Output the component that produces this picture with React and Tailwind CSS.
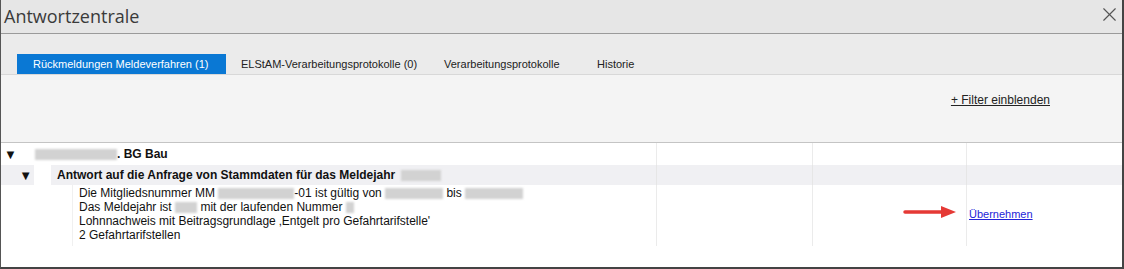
import { X } from "lucide-react"

const tabs = [
  { label: "Rückmeldungen Meldeverfahren (1)", w: "w-[209px] pl-[16px]", active: true },
  { label: "ELStAM-Verarbeitungsprotokolle (0)", w: "w-[203px] pl-[15px]" },
  { label: "Verarbeitungsprotokolle", w: "w-[153px] pl-[15px]" },
  { label: "Historie", w: "w-[80px] pl-[15px]" },
]

function Blur({ w }) {
  return <span className={`inline-block h-[11px] align-middle bg-[#d2d2d2] blur-[1px] ${w}`} />
}

function Arrow() {
  return (
    <svg width="54" height="14" viewBox="0 0 54 14">
      <path d="M2 7 H40" stroke="#e53935" strokeWidth="3.5" strokeLinecap="round" />
      <path d="M38 1 L53 7 L38 13 Z" fill="#e53935" />
    </svg>
  )
}

export default function App() {
  return (
    <div className="w-[1124px] h-[269px] flex flex-col bg-white border-l border-l-[#555] border-r-2 border-r-[#444] border-b-2 border-b-[#444] overflow-hidden font-['Liberation_Sans',Arial,sans-serif]">
      {/* title bar */}
      <div className="h-[34px] shrink-0 flex items-center justify-between bg-[#e6e6e6] border-b border-[#9a9a9a] pl-[3px] pr-[1px]">
        <span className="text-[18px] text-[#3a3a3a] font-['Open_Sans',sans-serif] leading-none pb-[2px]">Antwortzentrale</span>
        <X size={23} strokeWidth={1.2} className="text-[#555] mb-[4px]" />
      </div>

      {/* tabs */}
      <div className="h-[41px] shrink-0 flex items-end bg-[#ebebeb] border-b border-[#d8d8d8] pl-[16px]">
        {tabs.map((t) => (
          <div
            key={t.label}
            className={`h-[20px] shrink-0 flex items-center text-[11px] ${t.w} ${
              t.active ? "bg-[#0a78d4] text-white" : "text-[#222]"
            }`}
          >
            {t.label}
          </div>
        ))}
      </div>

      {/* filter */}
      <div className="h-[68px] shrink-0 flex justify-end bg-[#f4f4f4] border-b border-[#c4c4c4] pr-[72px] pt-[16px]">
        <span className="text-[12px] text-[#222] underline h-[15px]">+ Filter einblenden</span>
      </div>

      {/* grid */}
      <div className="grid grid-cols-[656px_156px_154px_1fr] text-[12px] text-[#111]">
        {/* row 1 */}
        <div className="h-[22px] flex items-center border-r border-[#ebebeb]">
          <span className="w-[34px] pl-[3px] text-[13px] leading-none">▼</span>
          <Blur w="w-[82px]" />
          <span className="font-bold">. BG Bau</span>
        </div>
        <div className="border-r border-[#ebebeb]" />
        <div className="border-r border-[#ebebeb]" />
        <div />

        {/* row 2 */}
        <div className="h-[20px] flex items-center border-r border-[#e6e6e6]">
          <span className="w-[33px] h-full flex items-center justify-end pr-[2px] bg-[#f0f0f3] text-[13px] leading-none">▼</span>
          <span className="w-[17px] h-full" />
          <span className="flex-1 h-full flex items-center gap-[6px] bg-[#f0f0f3] pl-[6px] font-bold">
            Antwort auf die Anfrage von Stammdaten für das Meldejahr
            <Blur w="w-[40px]" />
          </span>
        </div>
        <div className="bg-[#f0f0f3] border-r border-[#e6e6e6]" />
        <div className="bg-[#f0f0f3] border-r border-[#e6e6e6]" />
        <div className="bg-[#f0f0f3]" />

        {/* row 3 */}
        <div className="flex border-r border-[#ebebeb]">
          <div className="w-[71px]" />
          <div className="flex-1 border-l border-[#f0f0f0] pl-[6px] pt-[1px] pb-[4px] leading-[14px]">
            <div>
              Die Mitgliedsnummer MM <Blur w="w-[76px]" />-01 ist gültig von <Blur w="w-[58px]" /> bis{" "}
              <Blur w="w-[58px]" />
            </div>
            <div>
              Das Meldejahr ist <Blur w="w-[22px]" /> mit der laufenden Nummer <Blur w="w-[8px]" />
            </div>
            <div>Lohnnachweis mit Beitragsgrundlage ‚Entgelt pro Gefahrtarifstelle'</div>
            <div>2 Gefahrtarifstellen</div>
          </div>
        </div>
        <div className="border-r border-[#ebebeb]" />
        <div className="flex justify-end items-start pt-[20px] pr-[9px] border-r border-[#ebebeb]">
          <Arrow />
        </div>
        <div className="pt-[20px] pl-[2px]">
          <span className="text-[11px] text-[#2323d8] underline leading-[14px]">Übernehmen</span>
        </div>
      </div>
    </div>
  )
}
